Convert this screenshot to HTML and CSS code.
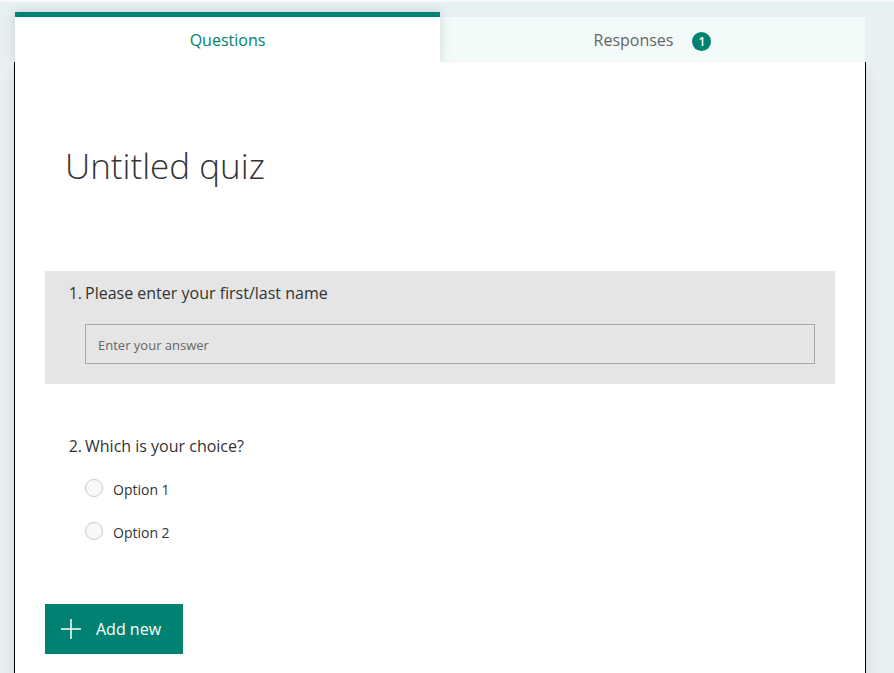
FILE: index.html
```html
<!DOCTYPE html>
<html lang="en">
<head>
    <meta charset="UTF-8">
    <meta name="viewport" content="width=device-width, initial-scale=1.0">
    <title>Untitled quiz</title>
    <link rel="stylesheet" href="styles.css">
</head>
<body>
    <div class="page">
        <div class="tabs" role="tablist">
            <button class="tab tab-active" type="button" role="tab" aria-selected="true">Questions</button>
            <button class="tab" type="button" role="tab" aria-selected="false">Responses <span class="badge">1</span></button>
        </div>

        <form class="form">
            <h1>Untitled quiz</h1>

            <div class="question question-filled">
                <label class="question-title" for="answer"><span class="number">1.</span>Please enter your first/last name</label>
                <input class="answer" id="answer" type="text" placeholder="Enter your answer">
            </div>

            <div class="question" role="radiogroup" aria-labelledby="choiceTitle">
                <div class="question-title" id="choiceTitle"><span class="number">2.</span>Which is your choice?</div>
                <div class="options">
                    <label class="option"><input type="radio" name="choice" value="1"><span>Option 1</span></label>
                    <label class="option"><input type="radio" name="choice" value="2"><span>Option 2</span></label>
                </div>
            </div>

            <button class="add-button" type="button">
                <svg width="20" height="20" viewBox="0 0 20 20" fill="none" stroke="currentColor" stroke-width="1.5" aria-hidden="true">
                    <path d="M10 0v20M0 10h20"/>
                </svg>
                Add new
            </button>
        </form>
    </div>
</body>
</html>
```
FILE: styles.css
```css
* {
    box-sizing: border-box;
}

body {
    margin: 0;
    font-family: 'Segoe UI', 'Open Sans', 'Noto Sans', sans-serif;
    font-size: 16px;
    color: #333;
    background-color: #e7f0f3;
    border-top: 2px solid #f8f9fb;
}

button,
input {
    font-family: inherit;
}

.page {
    display: flex;
    flex-direction: column;
    min-height: calc(100vh - 2px);
    padding: 10px 28px 0 14px;
}

.tabs {
    display: flex;
    align-items: flex-end;
    height: 50px;
    margin: 0 1px;
}

.tab {
    display: flex;
    flex: 1;
    align-items: center;
    justify-content: center;
    height: 45px;
    padding: 0;
    border: none;
    background-color: #f3fafa;
    color: #666;
    font-size: 16px;
    cursor: pointer;
}

.tab-active {
    height: 50px;
    border-top: 5px solid #008272;
    background-color: white;
    color: #008272;
    box-shadow: 0 0 12px rgba(0, 0, 0, 0.14);
    clip-path: inset(-12px -12px 0 -12px);
    z-index: 1;
}

.badge {
    width: 19px;
    height: 19px;
    margin: 3px 0 0 19px;
    border-radius: 50%;
    background-color: #008272;
    color: white;
    font-size: 12px;
    font-weight: 600;
    line-height: 19px;
    text-align: center;
}

.form {
    flex: 1;
    padding: 0 30px 20px;
    border: solid #000;
    border-width: 0 1px;
    background-color: white;
    box-shadow: 0 8px 12px rgba(0, 0, 0, 0.1);
}

h1 {
    margin: 76px 20px 77px;
    font-size: 35px;
    font-weight: 300;
    line-height: 56px;
}

.question {
    margin-bottom: 40px;
    padding: 10px 20px 20px;
}

.question-filled {
    background-color: #e5e5e5;
}

.question-title {
    display: flex;
    line-height: 24px;
}

.number {
    width: 20px;
    padding-right: 3px;
    text-align: right;
    flex-shrink: 0;
}

.answer {
    display: block;
    width: calc(100% - 20px);
    height: 40px;
    margin: 19px 0 0 20px;
    padding: 2px 12px 0;
    border: 1px solid #a6a6a6;
    border-radius: 0;
    background-color: transparent;
    color: #333;
    font-size: 13px;
}

.answer::placeholder {
    color: #666;
    opacity: 1;
}

.options {
    display: flex;
    flex-direction: column;
    align-items: flex-start;
    gap: 21px;
    margin: 21px 0 0 20px;
}

.option {
    display: flex;
    align-items: flex-start;
    gap: 10px;
    line-height: 22px;
    font-size: 14px;
    cursor: pointer;
}

.option input {
    appearance: none;
    width: 18px;
    height: 18px;
    margin: 0;
    border: 1px solid #c8c8c8;
    border-radius: 50%;
    background-color: #f8f8f8;
}

.option input:checked {
    border: 5px solid #008272;
}

.add-button {
    display: flex;
    align-items: center;
    gap: 15px;
    height: 50px;
    padding: 0 22px 0 16px;
    border: none;
    background-color: #008272;
    color: white;
    font-size: 16px;
    cursor: pointer;
}
```
